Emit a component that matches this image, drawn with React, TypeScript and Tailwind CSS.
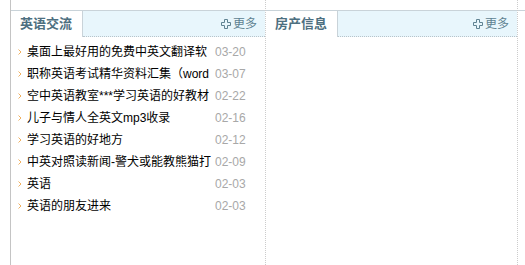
import React from "react";

const items = [
  { title: "桌面上最好用的免费中英文翻译软", date: "03-20" },
  { title: "职称英语考试精华资料汇集（word", date: "03-07" },
  { title: "空中英语教室***学习英语的好教材", date: "02-22" },
  { title: "儿子与情人全英文mp3收录", date: "02-16" },
  { title: "学习英语的好地方", date: "02-12" },
  { title: "中英对照读新闻-警犬或能教熊猫打", date: "02-09" },
  { title: "英语", date: "02-03" },
  { title: "英语的朋友进来", date: "02-03" },
];

function PlusIcon() {
  return (
    <svg width="10" height="10" viewBox="0 0 10 10" className="shrink-0">
      <path
        d="M3.5 0.5h3v3h3v3h-3v3h-3v-3h-3v-3h3z"
        fill="none"
        stroke="#5f8392"
        strokeWidth="1"
      />
    </svg>
  );
}

function Bullet() {
  return (
    <svg width="4" height="6" viewBox="0 0 4 6" className="mr-[5px] shrink-0">
      <path d="M0.5 0.5l2.5 2.5l-2.5 2.5" fill="none" stroke="#f0b060" strokeWidth="1" />
    </svg>
  );
}

function PanelHeader({ label }: { label: string }) {
  return (
    <div className="flex h-[27px] border-t border-[#c9d3d9]">
      <div className="flex w-[72px] items-center border-r border-[#c9d3d9] bg-white pl-[9px] text-[13px] font-bold text-[#4d6f80]">
        {label}
      </div>
      <div className="flex flex-1 items-center justify-end gap-[2px] border-b border-dotted border-[#b8c4ca] bg-[#e8f6fc] pr-[8px] text-[12px] text-[#5f8392]">
        <PlusIcon />
        <span>更多</span>
      </div>
    </div>
  );
}

export default function App() {
  return (
    <div
      className="flex h-[265px] w-[525px] bg-white pl-[10px]"
      style={{ fontFamily: '"Liberation Sans", "Noto Sans CJK SC", sans-serif' }}
    >
      <div className="flex flex-1 border-l border-[#c4c4c4]">
        <section className="flex w-[255px] flex-col border-r border-dotted border-[#cccccc]">
          <div className="h-[10px]" />
          <PanelHeader label="英语交流" />
          <ul className="pt-[4px] pl-[7px]">
            {items.map((item) => (
              <li key={item.title} className="flex h-[22px] items-center text-[12px]">
                <Bullet />
                <span className="w-[188px] overflow-hidden whitespace-nowrap text-black">
                  {item.title}
                </span>
                <span className="text-[12px] text-[#a8a8a8]">{item.date}</span>
              </li>
            ))}
          </ul>
        </section>
        <section className="flex w-[252px] flex-col border-r border-dotted border-[#cccccc]">
          <div className="h-[10px]" />
          <PanelHeader label="房产信息" />
        </section>
        <div className="flex flex-1 flex-col">
          <div className="h-[10px]" />
          <div className="border-t border-[#c9d3d9]" />
        </div>
      </div>
    </div>
  );
}
